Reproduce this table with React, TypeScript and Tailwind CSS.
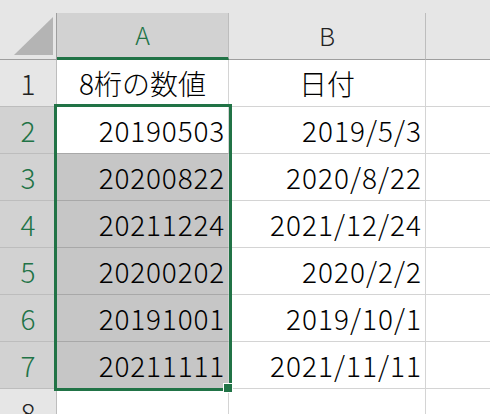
import React from 'react';

const rows = [
  { n: 1, a: '8桁の数値', b: '日付', head: true },
  { n: 2, a: '20190503', b: '2019/5/3' },
  { n: 3, a: '20200822', b: '2020/8/22' },
  { n: 4, a: '20211224', b: '2021/12/24' },
  { n: 5, a: '20200202', b: '2020/2/2' },
  { n: 6, a: '20191001', b: '2019/10/1' },
  { n: 7, a: '20211111', b: '2021/11/11' },
  { n: 8, a: '', b: '' },
];

function CornerCell() {
  return (
    <div className="bg-[#e6e6e6] border-r border-b border-[#9e9e9e]">
      <svg width="56" height="46" className="block">
        <polygon points="14,42 53,42 53,4" fill="#b4b4b4" />
      </svg>
    </div>
  );
}

export default function App() {
  return (
    <div className="relative w-[490px] h-[414px] overflow-hidden bg-white font-['Noto_Sans_CJK_JP',sans-serif] font-light text-black">
      <div className="h-[13px] bg-[#e6e6e6]" />
      <div className="grid grid-cols-[57px_172px_197px_1fr] auto-rows-[47px]">
        {/* column headers */}
        <CornerCell />
        <div className="flex items-center justify-center bg-[#d2d2d2] border-r border-r-[#bdbdbd] border-b-[3px] border-b-[#217346] text-[25px] text-[#217346]">
          A
        </div>
        <div className="flex items-center justify-center bg-[#e6e6e6] border-r border-r-[#bdbdbd] border-b border-b-[#9e9e9e] text-[25px] text-[#222]">
          B
        </div>
        <div className="bg-[#e6e6e6] border-b border-b-[#9e9e9e]" />

        {rows.map((r) => {
          const sel = r.n >= 2 && r.n <= 7;
          const shaded = r.n >= 3 && r.n <= 7;
          return (
            <React.Fragment key={r.n}>
              <div
                className={`flex items-center justify-center border-r border-b text-[28px] ${
                  sel
                    ? 'bg-[#d2d2d2] text-[#217346] border-r-[#9e9e9e] border-b-[#bdbdbd]'
                    : 'bg-[#e6e6e6] text-[#222] border-r-[#bdbdbd] border-b-[#bdbdbd]'
                }`}
              >
                {r.n}
              </div>
              <div
                className={`flex items-center text-[28px] border-r border-b border-r-[#d4d4d4] ${
                  r.head ? 'justify-center' : 'justify-end pr-[3px] tracking-[0.8px]'
                } ${shaded ? 'bg-[#c6c6c6]' : 'bg-white'} ${
                  r.n >= 2 && r.n <= 6 ? 'border-b-[#a8a8a8]' : 'border-b-[#d4d4d4]'
                }`}
              >
                {r.a}
              </div>
              <div
                className={`flex items-center text-[28px] border-r border-b border-[#d4d4d4] ${
                  r.head ? 'justify-center' : 'justify-end pr-[3px] tracking-[1px]'
                }`}
              >
                {r.b}
              </div>
              <div className="border-b border-[#d4d4d4]" />
            </React.Fragment>
          );
        })}
      </div>

      {/* selection A2:A7 */}
      <div className="absolute left-[54px] top-[104px] w-[178px] h-[287px] border-[3px] border-[#217346] pointer-events-none" />
      <div className="absolute left-[223px] top-[383px] w-[10px] h-[10px] bg-[#217346] border border-white" />
    </div>
  );
}
